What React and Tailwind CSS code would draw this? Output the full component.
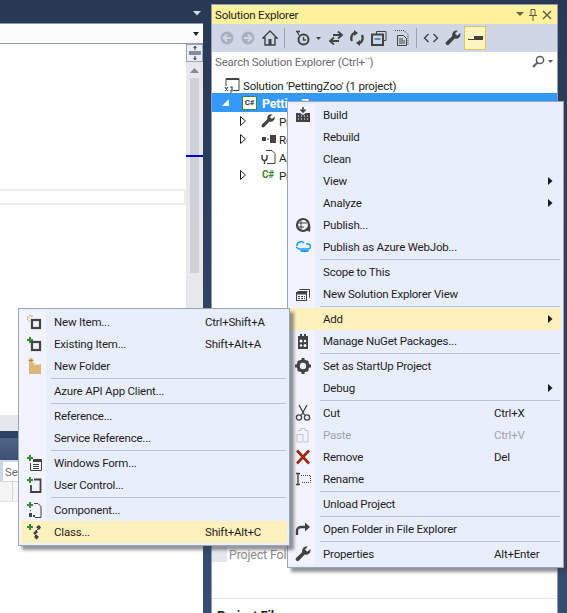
const font = 'font-["Roboto",sans-serif]';

function Arrow() {
  return (
    <svg width="5" height="8" viewBox="0 0 5 8" className="block">
      <path d="M0 0 L4.500 4 L0 8 Z" fill="#1b1b1b" />
    </svg>
  );
}

function Ic({ children, w = 16, h = 16 }) {
  return (
    <svg width={w} height={h} viewBox={`0 0 ${w} ${h}`} className="block">
      {children}
    </svg>
  );
}

const dark = '#424242';

const icons = {
  build: (
    <Ic>
      <path d="M8 0v4M5.500 2.500 8 5l2.500-2.500" stroke={dark} strokeWidth="1.600" fill="none" />
      <path d="M1 6h4l3 2 3-2h4v9H1z" fill={dark} />
      <path d="M3 9h1M6 9h1M9 9h1M12 9h1M3 12h1M6 12h1M9 12h1M12 12h1" stroke="#fff" strokeWidth="1.200" />
    </Ic>
  ),
  publish: (
    <Ic>
      <circle cx="8" cy="8" r="6" fill="none" stroke={dark} strokeWidth="2.200" />
      <path d="M3 6h9M3 10h6M6 3v10" stroke={dark} strokeWidth="1" />
      <path d="M10 12.500l5.500-4-.5 6.500z" fill={dark} />
    </Ic>
  ),
  azure: (
    <Ic>
      <path d="M2 7a4 4 0 0 1 7-3" fill="none" stroke="#1ba1e2" strokeWidth="1.500" />
      <path d="M1 8l3 2H13a2 2 0 0 0 0-5h-2" fill="none" stroke="#1ba1e2" strokeWidth="1.500" />
      <path d="M5 11h9a2 2 0 0 1-2 2H6z" fill="#1ba1e2" />
    </Ic>
  ),
  newView: (
    <Ic>
      <path d="M4.500 3.500h10v8M2.500 5.500h10" fill="none" stroke={dark} />
      <rect x="1.500" y="6.500" width="10" height="8" fill="none" stroke={dark} />
      <path d="M1 7h11v1.500H1z" fill={dark} />
      <path d="M3 10.500h7M3 12.500h7" stroke={dark} strokeDasharray="2 1" />
    </Ic>
  ),
  nuget: (
    <Ic>
      <path d="M3 3h2V1h2v2h2V1h2v2h2v13H3z" fill={dark} />
      <circle cx="6" cy="8" r="1.500" fill="#fff" />
      <circle cx="10" cy="8" r="1.200" fill="#fff" />
      <circle cx="6" cy="12.500" r="1.200" fill="#fff" />
      <circle cx="10" cy="12.500" r="1.500" fill="#fff" />
    </Ic>
  ),
  gear: (
    <Ic>
      <circle cx="8" cy="8" r="4.800" fill="none" stroke={dark} strokeWidth="3.200" />
      <path d="M6.500 0h3v3h-3zM6.500 13h3v3h-3zM0 6.500h3v3H0zM13 6.500h3v3h-3zM2 4l2-2 2 2-2 2zM10 4l2-2 2 2-2 2zM2 12l2-2 2 2-2 2zM10 12l2-2 2 2-2 2z" fill={dark} />
    </Ic>
  ),
  cut: (
    <Ic>
      <path d="M4 0l5.500 10M12 0L6.500 10" stroke={dark} strokeWidth="1.300" fill="none" />
      <circle cx="4" cy="12.500" r="2.600" fill="none" stroke={dark} strokeWidth="1.300" />
      <circle cx="12" cy="12.500" r="2.600" fill="none" stroke={dark} strokeWidth="1.300" />
    </Ic>
  ),
  paste: (
    <Ic>
      <path d="M3 3.500h3V1.500h4v2h3V15H9M2 7.500h6V15H2z" fill="none" stroke="#c2c5cc" />
    </Ic>
  ),
  remove: (
    <Ic>
      <path d="M2 1.500l12 13M14 1.500l-12 13" stroke="#a1260d" strokeWidth="2.600" />
    </Ic>
  ),
  rename: (
    <Ic>
      <path d="M1 2.500h4M1 13.500h4M3 2.500v11" stroke={dark} strokeWidth="1.400" />
      <path d="M6 4.500h9.500v7H6" fill="none" stroke={dark} strokeDasharray="1 1" />
    </Ic>
  ),
  open: (
    <Ic>
      <path d="M2 14V10a4 4 0 0 1 4-4h6" fill="none" stroke={dark} strokeWidth="2.400" />
      <path d="M10 1.500 15 6l-5 4.500z" fill={dark} />
    </Ic>
  ),
  wrench: (
    <Ic>
      <path d="M15.500 4.500a4.300 4.300 0 0 1-5.800 4L4 14.500a1.900 1.900 0 0 1-2.700-2.700L7.300 6a4.300 4.300 0 0 1 5.500-5.300L10 3.500l2.300 2.300 3-2.800z" fill={dark} />
    </Ic>
  ),
  newItem: (
    <Ic>
      <rect x="6" y="6" width="8" height="8" fill="none" stroke={dark} strokeWidth="2.200" />
      <path d="M4 1v1M1.500 2.500l1 1M1 5h1M6.500 1.500l-1 1M3 6.500v1" stroke="#d89a2e" strokeWidth="1.300" />
    </Ic>
  ),
  existing: (
    <Ic>
      <rect x="6" y="6" width="8" height="8" fill="none" stroke={dark} strokeWidth="2.200" />
      <path d="M4 1v6M1 4h6" stroke="#388a34" strokeWidth="2" />
    </Ic>
  ),
  folder: (
    <Ic>
      <path d="M3 5h5l1 1h6v10H3z" fill="#dcb67a" />
      <path d="M7.500 6.500h7" stroke="#f0dcb8" />
      <path d="M5 0v5M2.500 2.500h5M3 .5l4 4M7 .5l-4 4" stroke="#c27d1a" strokeWidth="0.900" />
    </Ic>
  ),
  winForm: (
    <Ic>
      <path d="M4 0v6M1 3h6" stroke="#388a34" strokeWidth="2" />
      <path d="M7 4.500h8.500V15.500H4.500V8" fill="none" stroke={dark} />
      <path d="M7 5h8v2H7z" fill={dark} />
      <path d="M7 9.500h6M7 11.500h6M7 13.500h6" stroke={dark} />
    </Ic>
  ),
  userCtl: (
    <Ic>
      <path d="M8 2.500h6.500v12.500H5V8" fill="none" stroke={dark} strokeWidth="1.800" />
      <path d="M4 0v6M1 3h6" stroke="#388a34" strokeWidth="2" />
    </Ic>
  ),
  component: (
    <Ic>
      <path d="M8 1.500h4l3 3v11H9" fill="none" stroke={dark} />
      <path d="M4 0v6M1 3h6" stroke="#388a34" strokeWidth="2" />
      <path d="M4 8h1v1H4zM3 11h3v4H3zM7 13h2v2H7z" fill={dark} />
    </Ic>
  ),
  klass: (
    <Ic>
      <path d="M4 0v6M1 3h6" stroke="#388a34" strokeWidth="2" />
      <path d="M7 9l3-3 2 2-3 3zM10 3l3-2 2 2.500-2 2.500zM8 13l2.500-2.500L13 13l-2.500 2.500z" fill={dark} />
      <path d="M8 9l5-5M9 11l2 2" stroke={dark} />
    </Ic>
  ),
};

const mainMenu = [
  { label: 'Build', icon: 'build' },
  { label: 'Rebuild' },
  { label: 'Clean' },
  { label: 'View', sub: true },
  { label: 'Analyze', sub: true },
  { label: 'Publish...', icon: 'publish' },
  { label: 'Publish as Azure WebJob...', icon: 'azure' },
  { sep: true },
  { label: 'Scope to This' },
  { label: 'New Solution Explorer View', icon: 'newView' },
  { sep: true },
  { label: 'Add', sub: true, active: true },
  { label: 'Manage NuGet Packages...', icon: 'nuget' },
  { sep: true },
  { label: 'Set as StartUp Project', icon: 'gear' },
  { label: 'Debug', sub: true },
  { sep: true },
  { label: 'Cut', icon: 'cut', keys: 'Ctrl+X' },
  { label: 'Paste', icon: 'paste', keys: 'Ctrl+V', disabled: true },
  { label: 'Remove', icon: 'remove', keys: 'Del' },
  { label: 'Rename', icon: 'rename' },
  { sep: true },
  { label: 'Unload Project' },
  { sep: true },
  { label: 'Open Folder in File Explorer', icon: 'open' },
  { sep: true },
  { label: 'Properties', icon: 'wrench', keys: 'Alt+Enter' },
];

const addMenu = [
  { label: 'New Item...', icon: 'newItem', keys: 'Ctrl+Shift+A' },
  { label: 'Existing Item...', icon: 'existing', keys: 'Shift+Alt+A' },
  { label: 'New Folder', icon: 'folder' },
  { sep: true },
  { label: 'Azure API App Client...' },
  { sep: true },
  { label: 'Reference...' },
  { label: 'Service Reference...' },
  { sep: true },
  { label: 'Windows Form...', icon: 'winForm' },
  { label: 'User Control...', icon: 'userCtl' },
  { sep: true },
  { label: 'Component...', icon: 'component' },
  { label: 'Class...', icon: 'klass', keys: 'Shift+Alt+C', active: true },
];

function Menu({ items, keyCol, className }) {
  return (
    <div className={`absolute border border-[#9ba7b7] bg-[#e9eefc] p-0.5 text-[11.5px] tracking-[-0.2px] text-[#1e1e1e] shadow-[4px_4px_3px_rgba(60,60,70,0.55)] ${className}`}>
      <div className="absolute bottom-0.5 left-0 top-0.5 w-[27px] bg-[#f1f4fe]" />
      <div className="relative flex flex-col">
        {items.map((it, i) =>
          it.sep ? (
            <div key={i} className="flex h-[3px] items-center pl-[30px] pr-px">
              <div className="h-px w-full bg-[#bcc3d3]" />
            </div>
          ) : (
            <div
              key={i}
              className={`flex h-[22px] items-center ${it.active ? 'bg-[#fff1bd]' : ''} ${it.disabled ? 'text-[#a2a4a5]' : ''}`}
            >
              <div className="flex w-[26px] shrink-0 justify-center">{icons[it.icon]}</div>
              <div className="ml-[7px] flex-1 whitespace-nowrap pt-[2px]">{it.label}</div>
              <div className={`whitespace-nowrap pt-[2px] ${keyCol}`}>{it.keys}</div>
              <div className="flex w-[13px] shrink-0 items-center">{it.sub && <Arrow />}</div>
            </div>
          ),
        )}
      </div>
    </div>
  );
}

function TreeArrow() {
  return (
    <svg width="6" height="10" viewBox="0 0 6 10" className="block">
      <path d="M0.500 0.500 5.500 5 0.500 9.500Z" fill="#fff" stroke="#1e1e1e" />
    </svg>
  );
}

function TreeRow({ arrow, icon, text }) {
  return (
    <div className="flex h-[18px] items-center pl-[28px]">
      <div className="w-[20px]">{arrow && <TreeArrow />}</div>
      <div className="flex w-[16px] justify-center">{icon}</div>
      <div className="ml-[3px] pt-[3px]">{text}</div>
    </div>
  );
}

function Toolbar() {
  return (
    <div className="flex h-[28px] shrink-0 items-center bg-[#cfd6e5] pl-[7px]">
      <Ic>
        <circle cx="8" cy="8" r="6.500" fill="#aab0bb" />
        <path d="M12 8H5M8 4.500 4.500 8 8 11.500" stroke="#cfd6e5" strokeWidth="2" fill="none" />
      </Ic>
      <div className="ml-[5px]">
        <Ic>
          <circle cx="8" cy="8" r="6.500" fill="#aab0bb" />
          <path d="M4 8h7M8 4.500 11.500 8 8 11.500" stroke="#cfd6e5" strokeWidth="2" fill="none" />
        </Ic>
      </div>
      <div className="ml-[6px]">
        <Ic>
          <path d="M8 1 1 8h2v7h10V8h2z" fill="none" stroke={dark} strokeWidth="1.400" />
          <path d="M6.500 9h3v6h-3z" fill={dark} />
        </Ic>
      </div>
      <div className="ml-[6px] h-[20px] w-px bg-[#9aa3b5]" />
      <div className="ml-[10px]">
        <Ic>
          <circle cx="8.500" cy="9.500" r="5" fill="none" stroke={dark} strokeWidth="2" />
          <path d="M8.500 7v3h2.500M1 1.500h4M2 1.500 4 5" stroke={dark} strokeWidth="1.300" fill="none" />
        </Ic>
      </div>
      <svg width="5" height="3" viewBox="0 0 5 3" className="ml-[5px] block">
        <path d="M0 0h5L2.500 3z" fill={dark} />
      </svg>
      <div className="ml-[7px]">
        <Ic>
          <path d="M14 5H5M10 1.500 14 5l-4 3.500M2 11h9M6 7.500 2 11l4 3.500" stroke={dark} strokeWidth="1.800" fill="none" />
        </Ic>
      </div>
      <div className="ml-[5px]">
        <Ic>
          <path d="M3 11a6 6 0 0 1 3-8.500M13 5a6 6 0 0 1-3 8.500" stroke={dark} strokeWidth="2.400" fill="none" />
          <path d="M5 0v6l4-3zM11 16v-6l-4 3z" fill={dark} />
        </Ic>
      </div>
      <div className="ml-[6px]">
        <Ic>
          <path d="M5.500 4V1.500h9.500v9H12.500" fill="none" stroke={dark} />
          <rect x="1" y="4.500" width="11" height="10.500" fill="none" stroke={dark} strokeWidth="2" />
          <path d="M3.500 9h6" stroke="#3a6ea5" strokeWidth="1.500" />
        </Ic>
      </div>
      <div className="ml-[7px]">
        <Ic>
          <path d="M1 .5h9l4 4V15" fill="none" stroke={dark} strokeDasharray="1 1" />
          <path d="M3.500 5.500h6l3 3v7h-9z" fill="none" stroke={dark} />
          <path d="M5 9h4M5 11h6M5 13h6" stroke={dark} />
        </Ic>
      </div>
      <div className="ml-[6px] h-[20px] w-px bg-[#9aa3b5]" />
      <div className="ml-[6px]">
        <Ic>
          <path d="M5.500 4 1.500 8l4 4M10.500 4l4 4-4 4" stroke={dark} strokeWidth="1.400" fill="none" />
        </Ic>
      </div>
      <div className="ml-[6px]">{icons.wrench}</div>
      <div className="ml-[3px] flex h-[24px] w-[22px] items-center justify-center border border-[#e5c365] bg-[#fdf4bf]">
        <svg width="15" height="5" viewBox="0 0 15 5" className="block">
          <path d="M0 3h15v1H0zM6 0h9v4H6z" fill={dark} />
        </svg>
      </div>
    </div>
  );
}

function SolutionExplorer() {
  return (
    <div className="mt-1 flex h-[609px] w-[347px] flex-col overflow-hidden border-x border-t border-[#8e9bbc] bg-white">
      <div className="flex h-[19px] shrink-0 items-center bg-[#fff29d] pl-[3px] pr-[5px] text-[11.5px] tracking-[-0.2px] text-[#1e1e1e]">
        <span className="flex-1 pt-[2px]">Solution Explorer</span>
        <svg width="9" height="5" viewBox="0 0 9 5" className="block">
          <path d="M0 0h8L4 4z" fill="#6b6440" />
        </svg>
        <svg width="10" height="12" viewBox="0 0 10 12" className="ml-[3px] block">
          <path d="M3 .5h4v6H3zM1 6.500h8M5 6.500V12" fill="none" stroke="#5e5a3c" />
        </svg>
        <svg width="10" height="10" viewBox="0 0 10 10" className="ml-[4px] block">
          <path d="M1 1l8 8M9 1 1 9" stroke="#5e5a3c" strokeWidth="1.300" />
        </svg>
      </div>
      <Toolbar />
      <div className="flex h-[19px] shrink-0 items-center bg-white pl-[3px] pr-1 text-[11.5px] tracking-[-0.2px] text-[#6d6d6d]">
        <span className="flex-1 pt-[2px]">Search Solution Explorer (Ctrl+¨)</span>
        <svg width="13" height="13" viewBox="0 0 13 13" className="block">
          <circle cx="8" cy="5" r="3.600" fill="none" stroke="#5a5a5a" strokeWidth="1.500" />
          <path d="M5.500 7.500 1 12" stroke="#5a5a5a" strokeWidth="2" />
        </svg>
        <svg width="5" height="3" viewBox="0 0 5 3" className="ml-[3px] block">
          <path d="M0 0h5L2.500 3z" fill="#5a5a5a" />
        </svg>
      </div>
      <div className="flex flex-1 flex-col pt-[6px] text-[11.5px] tracking-[-0.2px] text-[#1e1e1e]">
        <div className="flex h-[16px] shrink-0 items-center pl-[12px]">
          <Ic>
            <path d="M2 9V1.500h13v12H9" fill="none" stroke={dark} />
            <path d="M2 1h13v2H2z" fill={dark} />
            <path d="M1 10l3 4M4 10l-3 4M6 10h2v4H6M6 16h2" stroke={dark} strokeWidth="1.200" fill="none" />
          </Ic>
          <span className="ml-[3px] pt-[3px]">Solution 'PettingZoo' (1 project)</span>
        </div>
        <div className="flex h-[19px] shrink-0 items-center bg-[#3399ff] pl-[10px]">
          <svg width="7" height="7" viewBox="0 0 7 7" className="block">
            <path d="M7 0v7H0z" fill="#fff" />
          </svg>
          <div className="ml-[13px] flex h-[14px] w-[15px] items-center justify-center border border-[#388a34] bg-white text-[8px] font-bold leading-none text-[#333]">
            C#
          </div>
          <span className="ml-[5px] pt-[4px] text-[12.5px] font-bold text-white">PettingZoo</span>
        </div>
        <div className="flex shrink-0 flex-col">
          <TreeRow arrow icon={<div className="scale-90">{icons.wrench}</div>} text="Properties" />
          <TreeRow
            arrow
            icon={
              <svg width="15" height="8" viewBox="0 0 15 8" className="block">
                <path d="M1 2h4v4H1zM9 0h6v8H9z" fill={dark} />
                <path d="M6 4h2" stroke={dark} />
              </svg>
            }
            text="References"
          />
          <TreeRow
            icon={
              <svg width="16" height="16" viewBox="0 0 16 16" className="block">
                <path d="M6 1.500h6l3 3v10H7" fill="none" stroke={dark} />
                <path d="M2 6v3a2.500 2.500 0 0 0 5 0V6M4.500 11v4" stroke={dark} strokeWidth="1.500" fill="none" />
              </svg>
            }
            text="App.config"
          />
          <TreeRow
            arrow
            icon={<span className="text-[10px] font-bold leading-none text-[#388a34]">C#</span>}
            text="Program.cs"
          />
        </div>
        <div className="mt-[363px] flex h-[15px] w-[100px] shrink-0 items-center">
          <div className="h-full w-[15px] bg-[#e6e7ed]" />
          <span className="ml-[2px] whitespace-nowrap pt-[2px] text-[12.5px] text-[#8a8a8a]">Project Fold</span>
        </div>
        <div className="mt-[36px] shrink-0 border-t border-[#e5e5e5] pl-[5px] pt-[7px] text-[13px] font-bold">Project File</div>
      </div>
    </div>
  );
}

function LeftPane() {
  return (
    <div className="flex h-full w-[203px] flex-col">
      <div className="flex h-[23px] shrink-0 items-end justify-end pb-[7px] pr-[2px]">
        <svg width="8" height="5" viewBox="0 0 8 5" className="block">
          <path d="M0 0h8L4 4.500z" fill="#d5dbe6" />
        </svg>
      </div>
      <div className="flex h-[21px] shrink-0 items-center justify-end border-y border-[#8a96b3] bg-[#fcfcfc] pr-[4px]">
        <svg width="6" height="4" viewBox="0 0 6 4" className="block">
          <path d="M0 0h6L3 4z" fill="#1e1e1e" />
        </svg>
      </div>
      <div className="flex h-[371px] shrink-0">
        <div className="flex-1 bg-white pt-[145px]">
          <div className="h-[16px] border-y-2 border-r-2 border-[#eeeeee] bg-white" />
        </div>
        <div className="flex w-[17px] flex-col bg-[#e8e8ec]">
          <div className="flex h-[18px] shrink-0 items-center justify-center border border-[#9ba7b7] bg-[#e9eefc]">
            <svg width="12" height="14" viewBox="0 0 12 14" className="block">
              <path d="M0 6h12M0 8h12M6 0v4M6 10v4M4.500 2 6 .5 7.500 2M4.500 12 6 13.500 7.500 12" stroke="#1e2a3e" fill="none" />
            </svg>
          </div>
          <div className="mt-[6px] flex justify-center">
            <svg width="9" height="5" viewBox="0 0 9 5" className="block">
              <path d="M4.500 0 9 5H0z" fill="#868999" />
            </svg>
          </div>
          <div className="mx-auto mt-[5px] h-[195px] w-[9px] bg-[#d0d1d7]" />
        </div>
      </div>
      <div className="h-[16px] shrink-0 bg-[#e6e7ed]" />
      <div className="h-[7px] shrink-0 bg-[#2d4263]" />
      <div className="h-[22px] shrink-0 bg-gradient-to-b from-[#4d6286] to-[#3d5273]" />
      <div className="flex h-[22px] shrink-0 items-center bg-[#cfd6e5] pl-[3px]">
        <div className="h-[19px] w-[60px] bg-white pl-[2px] pt-px text-[11.5px] leading-[19px] tracking-[-0.2px] text-[#6d6d6d]">Search</div>
      </div>
      <div className="flex h-[20px] shrink-0 border-b border-[#e5e5e5] bg-[#f5f5f5]">
        <div className="h-full w-[13px] border-r border-[#d5d5d5]" />
      </div>
      <div className="flex-1 bg-white" />
    </div>
  );
}

export default function App() {
  return (
    <div className={`relative h-[613px] w-[567px] overflow-hidden bg-gradient-to-b from-[#293955] to-[#364e70] ${font}`}>
      <div className="flex h-full">
        <LeftPane />
        <div className="ml-[8px]">
          <SolutionExplorer />
        </div>
      </div>
      <div className="absolute left-[186px] top-[155px] h-[2px] w-[17px] bg-[#0000d4]" />
      <Menu items={mainMenu} keyCol="w-[54px]" className="left-[287px] top-[101px] w-[277px]" />
      <Menu items={addMenu} keyCol="w-[69px]" className="left-[18px] top-[308px] w-[272px]" />
    </div>
  );
}
